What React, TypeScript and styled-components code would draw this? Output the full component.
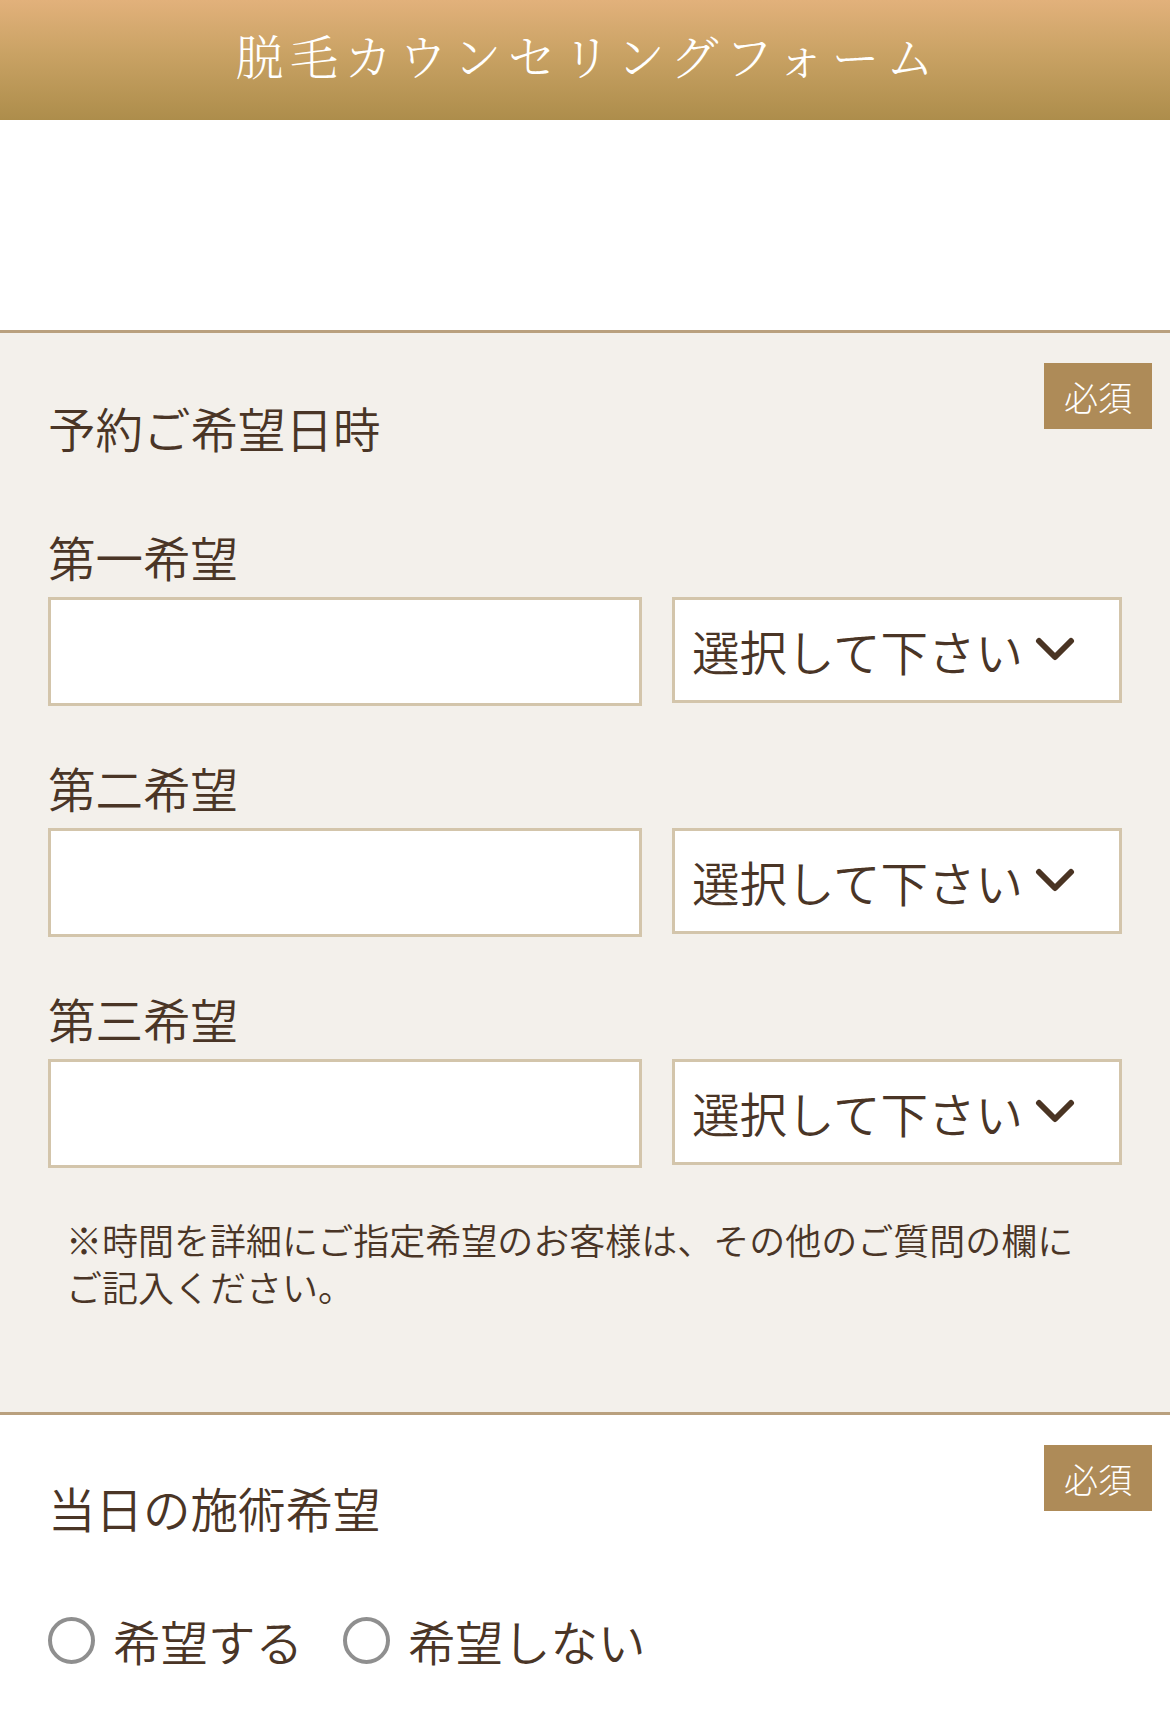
import React from 'react'
import styled, { createGlobalStyle } from 'styled-components'

const GlobalStyle = createGlobalStyle`
  html, body {
    margin: 0;
    padding: 0;
    background: #ffffff;
  }

  body {
    font-family: 'Noto Sans CJK JP', 'Noto Sans', sans-serif;
    color: #4a3526;
  }

  * {
    box-sizing: border-box;
  }
`

const Page = styled.div`
  width: 1170px;
  min-height: 1728px;
  background: #ffffff;
  overflow: hidden;
`

const Header = styled.header`
  height: 120px;
  display: flex;
  align-items: center;
  justify-content: center;
  padding-bottom: 10px;
  background: linear-gradient(to bottom, #e2b17b 0%, #c9a264 45%, #ad8d4b 100%);
`

const HeaderTitle = styled.h1`
  margin: 0;
  padding-left: 6px;
  font-family: 'Noto Serif CJK JP', 'Noto Sans CJK JP', serif;
  font-weight: 300;
  font-size: 48px;
  letter-spacing: 6.5px;
  color: #ffffff;
  line-height: 1;
`

const Spacer = styled.div`
  height: 210px;
`

const Section = styled.section<{ $tone: 'beige' | 'white'; $top: number; $bottom: number }>`
  position: relative;
  border-top: 3px solid #b9a07e;
  background: ${p => (p.$tone === 'beige' ? '#f3f0eb' : '#ffffff')};
  padding: ${p => p.$top}px 48px ${p => p.$bottom}px;
`

const Badge = styled.span`
  position: absolute;
  top: 30px;
  right: 18px;
  width: 108px;
  height: 66px;
  display: flex;
  align-items: center;
  justify-content: center;
  background: #ae8b58;
  color: #ffffff;
  font-size: 34px;
  font-weight: 300;
`

const SectionTitle = styled.h2`
  margin: 0;
  font-size: 47.5px;
  font-weight: 350;
  line-height: 69px;
  color: #4a3526;
`

const FieldGroup = styled.div<{ $first?: boolean }>`
  margin-top: ${p => (p.$first ? 63 : 50)}px;
`

const FieldLabel = styled.label`
  display: block;
  font-size: 47.5px;
  font-weight: 350;
  line-height: 64px;
  margin-bottom: 8px;
  color: #4a3526;
`

const FieldRow = styled.div`
  display: grid;
  grid-template-columns: 594px 450px;
  column-gap: 30px;
  align-items: start;
`

const TextInput = styled.input`
  height: 109px;
  width: 100%;
  border: 3px solid #d3c5ab;
  border-radius: 0;
  background: #ffffff;
  outline: none;
  font-size: 40px;
  padding: 0 16px;
`

const SelectBox = styled.div`
  height: 106px;
  border: 3px solid #d3c5ab;
  background: #ffffff;
  display: flex;
  align-items: center;
  gap: 12px;
  padding-left: 17px;
  font-size: 47.5px;
  font-weight: 350;
  color: #4a3526;
`

const Note = styled.p`
  margin: 48px 0 0;
  padding: 0 36px 0 18px;
  font-size: 36px;
  font-weight: 350;
  line-height: 47px;
  color: #4a3526;
`

const RadioRow = styled.div`
  display: flex;
  align-items: center;
  margin-top: 64px;
`

const RadioOption = styled.label`
  display: flex;
  align-items: center;
  font-size: 47.5px;
  font-weight: 350;
  line-height: 69px;
  color: #4a3526;
  margin-right: 40px;
`

const RadioCircle = styled.span`
  width: 47px;
  height: 47px;
  border-radius: 50%;
  border: 4.5px solid #8f8f8f;
  background: #ffffff;
  margin-right: 18px;
  flex-shrink: 0;
`

const Chevron = () => (
  <svg width="40" height="26" viewBox="0 0 40 26">
    <path
      d="M4 4 L20 20 L36 4"
      fill="none"
      stroke="#4a3423"
      strokeWidth="6"
      strokeLinecap="round"
      strokeLinejoin="round"
    />
  </svg>
)

const choices = ['第一希望', '第二希望', '第三希望']

const App = () => {
  return (
    <Page>
      <GlobalStyle />
      <Header>
        <HeaderTitle>脱毛カウンセリングフォーム</HeaderTitle>
      </Header>

      <Spacer />

      <Section $tone='beige' $top={60} $bottom={102}>
        <Badge>必須</Badge>
        <SectionTitle>予約ご希望日時</SectionTitle>

        {choices.map((label, i) => (
          <FieldGroup key={label} $first={i === 0}>
            <FieldLabel>{label}</FieldLabel>
            <FieldRow>
              <TextInput type='text' />
              <SelectBox>
                <span>選択して下さい</span>
                <Chevron />
              </SelectBox>
            </FieldRow>
          </FieldGroup>
        ))}

        <Note>
          ※時間を詳細にご指定希望のお客様は、その他のご質問の欄にご記入ください。
        </Note>
      </Section>

      <Section $tone='white' $top={58} $bottom={50}>
        <Badge>必須</Badge>
        <SectionTitle>当日の施術希望</SectionTitle>
        <RadioRow>
          <RadioOption>
            <RadioCircle />
            希望する
          </RadioOption>
          <RadioOption>
            <RadioCircle />
            希望しない
          </RadioOption>
        </RadioRow>
      </Section>
    </Page>
  )
}

export default App
